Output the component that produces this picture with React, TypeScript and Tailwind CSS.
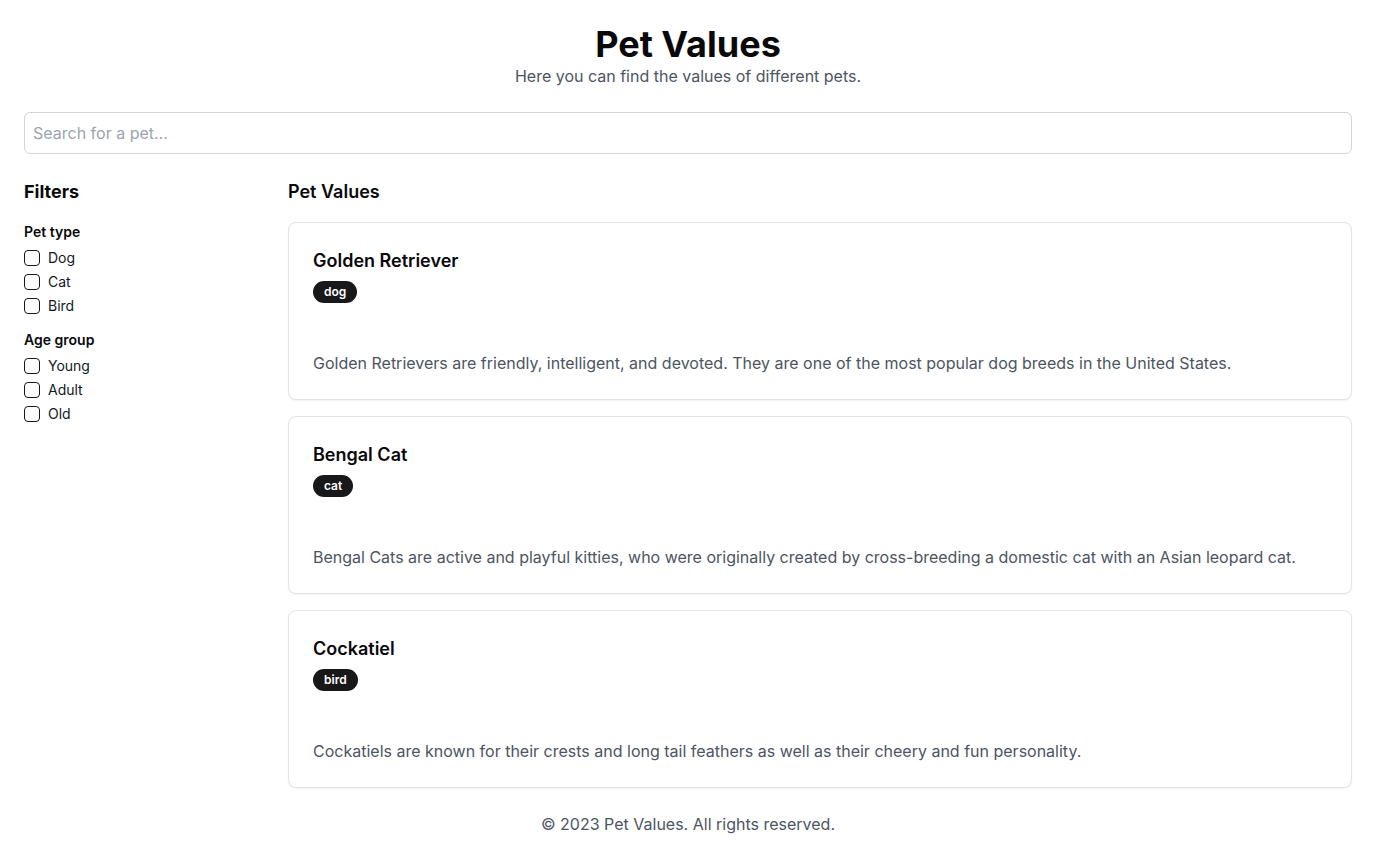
import { useState } from "react";

interface Pet {
  name: string;
  type: string;
  description: string;
}

const PETS: Pet[] = [
  {
    name: "Golden Retriever",
    type: "dog",
    description:
      "Golden Retrievers are friendly, intelligent, and devoted. They are one of the most popular dog breeds in the United States.",
  },
  {
    name: "Bengal Cat",
    type: "cat",
    description:
      "Bengal Cats are active and playful kitties, who were originally created by cross-breeding a domestic cat with an Asian leopard cat.",
  },
  {
    name: "Cockatiel",
    type: "bird",
    description:
      "Cockatiels are known for their crests and long tail feathers as well as their cheery and fun personality.",
  },
];

const FILTERS = [
  { title: "Pet type", options: ["Dog", "Cat", "Bird"] },
  { title: "Age group", options: ["Young", "Adult", "Old"] },
];

function FilterCheck({ label }: { label: string }) {
  const [checked, setChecked] = useState(false);
  return (
    <label className="flex h-5 items-center gap-2 text-sm text-[#111827]">
      <button
        type="button"
        onClick={() => setChecked(!checked)}
        className={
          "h-4 w-4 shrink-0 rounded-[4px] border border-[#18181b] " +
          (checked ? "bg-[#18181b]" : "bg-white")
        }
      />
      {label}
    </label>
  );
}

function PetCard({ pet }: { pet: Pet }) {
  return (
    <div className="rounded-lg border border-[#e4e4e7] bg-white shadow-[0_1px_2px_rgba(0,0,0,0.05)]">
      <div className="flex flex-col items-start gap-1.5 p-6">
        <h3 className="text-lg leading-7 font-semibold text-[#09090b]">{pet.name}</h3>
        <span className="inline-flex h-[22px] items-center rounded-full bg-[#18181b] px-[11px] text-xs font-semibold text-white">
          {pet.type}
        </span>
      </div>
      <div className="p-6">
        <p className="text-base text-[#4b5563]">{pet.description}</p>
      </div>
    </div>
  );
}

export default function App() {
  const [query, setQuery] = useState("");
  const shown = PETS.filter((p) => p.name.toLowerCase().includes(query.toLowerCase()));

  return (
    <div
      className="min-h-screen bg-white px-6 pt-6 pb-6 text-[#09090b]"
      style={{ fontFamily: "Inter, 'Noto Sans', sans-serif" }}
    >
      <header className="text-center">
        <h1 className="text-4xl font-bold">Pet Values</h1>
        <p className="text-base text-[#4b5563]">Here you can find the values of different pets.</p>
      </header>

      <input
        value={query}
        onChange={(e) => setQuery(e.target.value)}
        placeholder="Search for a pet..."
        className="mt-6 h-[42px] w-full rounded-md border border-[#d4d4d8] px-2 text-base outline-none placeholder:text-[#9ca3af]"
      />

      <div className="mt-6 flex gap-6">
        <aside className="w-60 shrink-0">
          <h2 className="text-lg leading-7 font-bold">Filters</h2>
          <div className="mt-4 flex flex-col gap-[14px]">
            {FILTERS.map((f) => (
              <div key={f.title}>
                <h3 className="text-sm font-semibold">{f.title}</h3>
                <div className="mt-1.5 flex flex-col gap-1">
                  {f.options.map((o) => (
                    <FilterCheck key={o} label={o} />
                  ))}
                </div>
              </div>
            ))}
          </div>
        </aside>

        <main className="min-w-0 flex-1">
          <h2 className="text-lg leading-7 font-semibold">Pet Values</h2>
          <div className="mt-4 flex flex-col gap-4">
            {shown.map((p) => (
              <PetCard key={p.name} pet={p} />
            ))}
          </div>
        </main>
      </div>

      <footer className="mt-6 text-center text-base text-[#4b5563]">
        © 2023 Pet Values. All rights reserved.
      </footer>
    </div>
  );
}
